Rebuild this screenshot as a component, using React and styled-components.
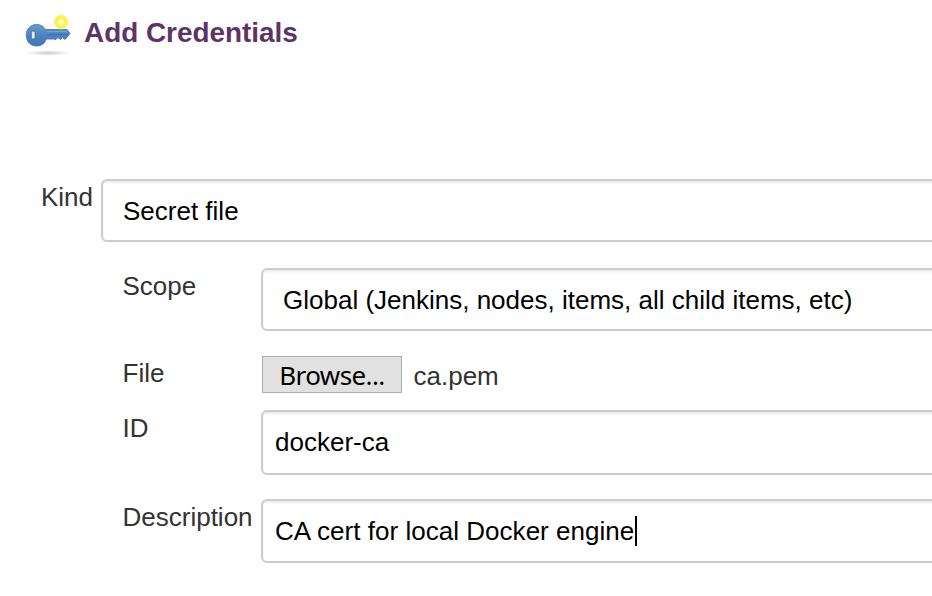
import React from "react";
import styled, { createGlobalStyle } from "styled-components";

const GlobalStyle = createGlobalStyle`
  * { box-sizing: border-box; }
  body { margin: 0; background: #fff; overflow: hidden; }
`;

const Page = styled.main`
  height: 596px;
  overflow: hidden;
  color: #333;
  font: 26px/30px "Liberation Sans", Arial, sans-serif;
`;

const Header = styled.header`
  display: flex;
  height: 179px;
  padding: 10px 0 0 20px;
`;

const Title = styled.h1`
  margin: 8px 0 0 10px;
  color: #5c3566;
  font-size: 27.9px;
  line-height: 30px;
  font-weight: bold;
  white-space: nowrap;
`;

const Row = styled.div`
  display: grid;
  grid-template-columns: ${(p) => (p.$nested ? "138.5px 1fr" : "60px 1fr")};
  margin-left: ${(p) => (p.$nested ? 122.5 : 41)}px;
  height: ${(p) => p.$height}px;
  align-items: start;
`;

const Label = styled.label`
  padding-top: ${(p) => p.$top ?? 3}px;
  white-space: nowrap;
`;

const Field = styled.div`
  display: flex;
  height: ${(p) => p.$height}px;
  margin-right: -20px;
  padding: 15px 0 0 ${(p) => (p.$select ? 20 : 12)}px;
  border: 2px solid #ccc;
  border-radius: 6px;
  box-shadow: inset 0 2px 2px rgba(0, 0, 0, 0.075);
  color: #000;
  white-space: pre;
`;

const FocusedField = styled(Field)`
  letter-spacing: 0.03px;
`;

const Caret = styled.span`
  width: 2px;
  height: 30px;
  margin-left: 1px;
  background: #000;
`;

const FilePicker = styled.div`
  display: flex;
  padding-left: 1px;
`;

const BrowseButton = styled.button`
  width: 140px;
  height: 37px;
  margin: 0;
  padding: 1px 0 0;
  border: 1px solid #adadad;
  background: #e1e1e1;
  color: #000;
  font: 26px/34px "Noto Sans", sans-serif;
  letter-spacing: -0.6px;
`;

const FileName = styled.span`
  margin: 5px 0 0 11.5px;
`;

function KeyIcon() {
  return (
    <svg width="54" height="48" viewBox="0 0 54 48">
      <defs>
        <linearGradient id="keyBlue" x1="0" y1="0" x2="0" y2="1">
          <stop offset="0" stopColor="#6a9bd0" />
          <stop offset="0.5" stopColor="#4b85c3" />
          <stop offset="1" stopColor="#4275ae" />
        </linearGradient>
        <radialGradient id="keyShadow">
          <stop offset="0" stopColor="#000" stopOpacity="0.2" />
          <stop offset="1" stopColor="#000" stopOpacity="0" />
        </radialGradient>
        <radialGradient id="glow">
          <stop offset="0.2" stopColor="#fffbc0" />
          <stop offset="0.5" stopColor="#fff23b" />
          <stop offset="0.8" stopColor="#fff45c" />
          <stop offset="1" stopColor="#fff78a" stopOpacity="0" />
        </radialGradient>
      </defs>
      <ellipse cx="28" cy="43" rx="23" ry="2.8" fill="url(#keyShadow)" />
      <path
        d="M16.5 14.5C10.5 14.5 6.3 19 6.3 25.2C6.3 31.5 10.5 36 16.5 36C21 36 25 33.5 26.2 29L34 29L36 29.5L38 27.5L40 29.5L42.5 27.5L45 29.5L47 27.5L50 23.5L47 19.5L25.5 19.5C24 16.5 20.5 14.5 16.5 14.5Z"
        fill="url(#keyBlue)"
        stroke="#4c80b9"
        strokeWidth="1"
        strokeLinejoin="round"
      />
      <path d="M27 24.5H48" stroke="#3465a4" strokeWidth="1.3" opacity="0.65" />
      <path d="M27 21.5H47" stroke="#8bb4df" strokeWidth="1" opacity="0.5" />
      <rect x="11.2" y="21" width="4" height="8" rx="1.5" fill="#e6ece9" stroke="#426b98" />
      <circle cx="41" cy="12" r="8" fill="url(#glow)" />
      <circle cx="41" cy="12" r="2.2" fill="#fffde0" />
    </svg>
  );
}

export default function App() {
  return (
    <>
      <GlobalStyle />
      <Page>
        <Header>
          <KeyIcon />
          <Title>Add Credentials</Title>
        </Header>
        <Row $height={89}>
          <Label>Kind</Label>
          <Field $height={63} $select>Secret file</Field>
        </Row>
        <Row $nested $height={88}>
          <Label>Scope</Label>
          <Field $height={63} $select>Global (Jenkins, nodes, items, all child items, etc)</Field>
        </Row>
        <Row $nested $height={54}>
          <Label $top={2}>File</Label>
          <FilePicker>
            <BrowseButton type="button">Browse...</BrowseButton>
            <FileName>ca.pem</FileName>
          </FilePicker>
        </Row>
        <Row $nested $height={89}>
          <Label>ID</Label>
          <Field $height={65}>docker-ca</Field>
        </Row>
        <Row $nested $height={64}>
          <Label>Description</Label>
          <FocusedField $height={64}>
            CA cert for local Docker engine
            <Caret />
          </FocusedField>
        </Row>
      </Page>
    </>
  );
}
